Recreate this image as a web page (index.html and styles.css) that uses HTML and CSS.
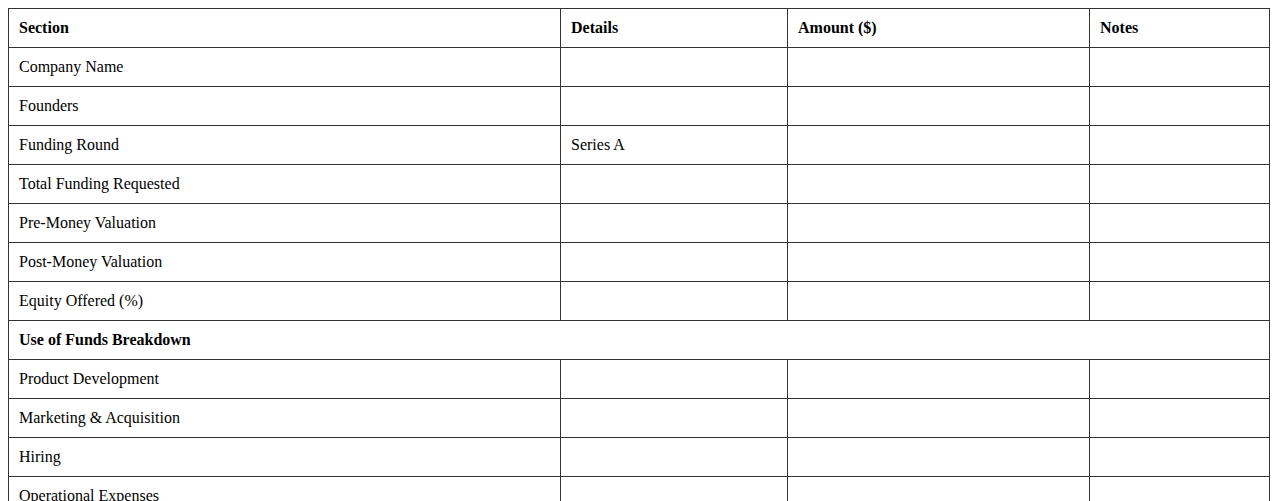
FILE: index.html
```html
<!DOCTYPE html>
<html lang="en">
<head>
<meta charset="utf-8">
<title>Funding Request</title>
<link rel="stylesheet" href="styles.css">
</head>
<body>
<table class="grid">
  <colgroup>
    <col class="c1">
    <col class="c2">
    <col class="c3">
    <col class="c4">
  </colgroup>
  <thead>
    <tr><th>Section</th><th>Details</th><th>Amount ($)</th><th>Notes</th></tr>
  </thead>
  <tbody>
    <tr><td>Company Name</td><td></td><td></td><td></td></tr>
    <tr><td>Founders</td><td></td><td></td><td></td></tr>
    <tr><td>Funding Round</td><td>Series A</td><td></td><td></td></tr>
    <tr><td>Total Funding Requested</td><td></td><td></td><td></td></tr>
    <tr><td>Pre-Money Valuation</td><td></td><td></td><td></td></tr>
    <tr><td>Post-Money Valuation</td><td></td><td></td><td></td></tr>
    <tr><td>Equity Offered (%)</td><td></td><td></td><td></td></tr>
    <tr><td class="group" colspan="4">Use of Funds Breakdown</td></tr>
    <tr><td>Product Development</td><td></td><td></td><td></td></tr>
    <tr><td>Marketing &amp; Acquisition</td><td></td><td></td><td></td></tr>
    <tr><td>Hiring</td><td></td><td></td><td></td></tr>
    <tr><td>Operational Expenses</td><td></td><td></td><td></td></tr>
    <tr><td>Other</td><td></td><td></td><td></td></tr>
  </tbody>
</table>
</body>
</html>
```
FILE: styles.css
```css
body {
  margin: 8px;
  font-family: "Liberation Serif", "Times New Roman", serif;
  font-size: 16px;
  color: #000;
  background: #fff;
}
.grid {
  width: 100%;
  border-collapse: collapse;
  table-layout: fixed;
}
.c1 { width: 552px; }
.c2 { width: 227px; }
.c3 { width: 302px; }
.grid th,
.grid td {
  border: 1px solid #333;
  padding: 10px;
  text-align: left;
  height: 18px;
}
.grid th { font-weight: bold; }
.grid .group { font-weight: bold; }
```
